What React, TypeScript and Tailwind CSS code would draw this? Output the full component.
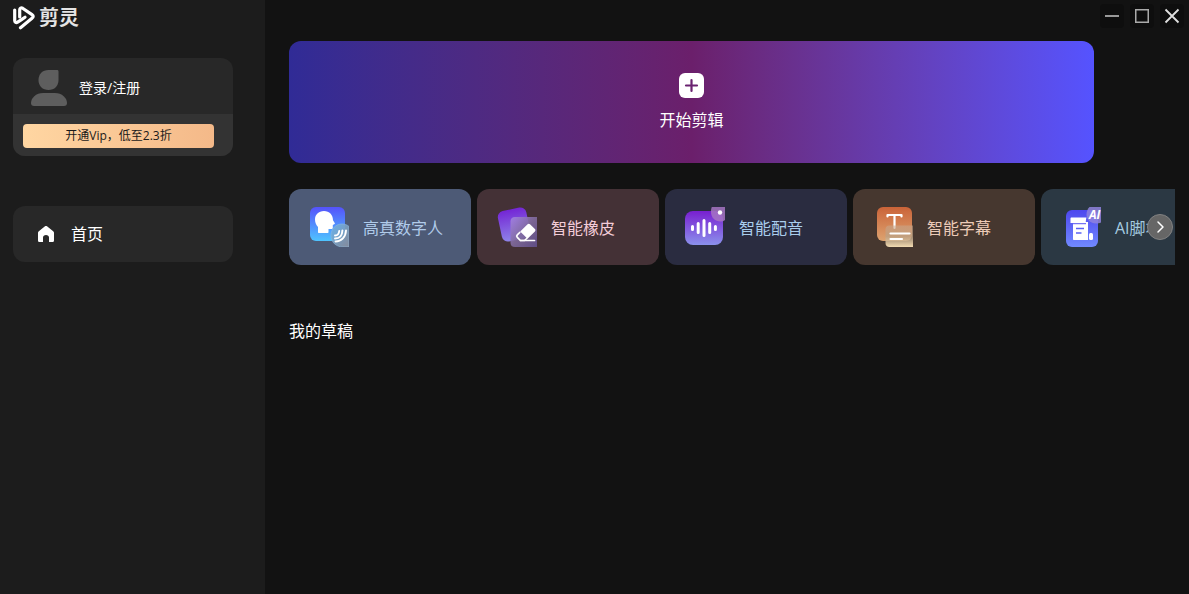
import type { ReactNode } from "react";

function Logo() {
  return (
    <svg width="22" height="24" viewBox="0 0 22 24" fill="none" stroke="#fff" strokeLinecap="round" strokeLinejoin="round" aria-hidden="true">
      <path d="M1.700 4V14.500C1.700 16.300 3.200 17 4.600 16.200L8.500 13.600L12 11.200" strokeWidth="3.200" />
      <path d="M6.700 11V4C6.700 2.200 8.200 1.400 9.600 2.200L19 8.600C20.600 9.700 20.600 11 19 12.200L7.500 21.800" strokeWidth="3.200" />
    </svg>
  );
}

function DigitalHumanIcon() {
  return (
    <svg width="40" height="40" viewBox="0 0 40 40" fill="none" aria-hidden="true">
      <defs>
        <linearGradient id="human-bg" x1="0" y1="0" x2="0" y2="1">
          <stop stopColor="#5552fb" />
          <stop offset="1" stopColor="#4fc4ff" />
        </linearGradient>
        <linearGradient id="human-glass" x1="0" y1="0" x2="1" y2="1">
          <stop stopColor="#6bb2e6" />
          <stop offset="1" stopColor="#8b90a0" />
        </linearGradient>
      </defs>
      <rect x="1" width="35" height="34" rx="6" fill="url(#human-bg)" />
      <path d="M15 4C9.600 4 6 7.600 6 12.500C6 15.800 7.300 18.200 9 20V25C9 25.700 9.300 26 10 26H18.500C19.200 26 19.500 25.700 19.500 25V22H22.500C23.300 22 23.800 21.500 23.800 20.700V18L25.600 17C26 16.700 26 16.300 25.700 15.900L24 13.300C24 7.800 20.300 4 15 4Z" fill="#fff" />
      <path d="M22 28.500C22 21.500 27 17 33 17C36 17 38.500 18 40 19.500V40H34C27 40 22 35 22 28.500Z" fill="url(#human-glass)" fillOpacity=".9" stroke="#8fb8dc" strokeWidth=".6" />
      <path d="M26 28.500C28.500 28.500 30 26.800 30.200 24M26 31.500C30.300 31.500 33.200 28.500 33.400 23.500M26.500 34.500C32.500 34.500 36.700 30 37 23.500" stroke="#fff" strokeWidth="1.900" strokeLinecap="round" />
    </svg>
  );
}

function EraserIcon() {
  return (
    <svg width="40" height="40" viewBox="0 0 40 40" fill="none" aria-hidden="true">
      <defs>
        <linearGradient id="eraser-bg" x1="0" y1="0" x2="0" y2="1">
          <stop stopColor="#7426d5" />
          <stop offset="1" stopColor="#8e83e8" />
        </linearGradient>
        <linearGradient id="eraser-glass" x1="0" y1="0" x2="1" y2="1">
          <stop stopColor="#a484e4" />
          <stop offset=".5" stopColor="#806a9c" />
          <stop offset="1" stopColor="#62508e" />
        </linearGradient>
      </defs>
      <rect x="2.500" y="2" width="29" height="31" rx="6" fill="url(#eraser-bg)" transform="rotate(-12 17 17)" />
      <path d="M18 10H40V40H18C15 40 13.500 38.500 13.500 35.500V14.500C13.500 11.500 15 10 18 10Z" fill="url(#eraser-glass)" fillOpacity=".9" />
      <path d="M30.600 17.300C31.300 16.600 32.300 16.600 33 17.300L37.900 22.100C38.600 22.800 38.600 23.700 37.900 24.400L30.500 31.800L23.200 24.500Z" fill="#fff" />
      <path d="M23.200 25L20.300 27.900C19.500 28.700 19.500 29.600 20.300 30.400L23.400 33.500H27.500L30.200 31" stroke="#fff" strokeWidth="1.700" strokeLinejoin="round" />
      <path d="M23.500 33.500H37.500" stroke="#fff" strokeWidth="1.700" strokeLinecap="round" />
    </svg>
  );
}

function DubbingIcon() {
  return (
    <svg width="40" height="40" viewBox="0 0 40 40" fill="none" aria-hidden="true">
      <defs>
        <linearGradient id="dub-bg" x1="0" y1="0" x2="0" y2="1">
          <stop stopColor="#781fd0" />
          <stop offset="1" stopColor="#8b91ec" />
        </linearGradient>
      </defs>
      <rect y="4" width="38" height="34" rx="8" fill="url(#dub-bg)" />
      <path d="M7.500 19.500V22.500M13.200 16.500V25.500M19 13.500V28.500M24.700 16.500V25.500M30.400 19.500V22.500" stroke="#fff" strokeWidth="3" strokeLinecap="round" />
      <path d="M26.800 0H40V13C38.700 14 37 14.500 35.500 14.500C30 14.500 26 10.500 26 5C26 3 26.200 1.300 26.800 0Z" fill="#a675c3" fillOpacity=".85" />
      <circle cx="35" cy="5.500" r="2.200" fill="#fff" />
    </svg>
  );
}

function SubtitleIcon() {
  return (
    <svg width="40" height="40" viewBox="0 0 40 40" fill="none" aria-hidden="true">
      <defs>
        <linearGradient id="sub-bg" x1="0" y1="0" x2="0" y2="1">
          <stop stopColor="#ca6338" />
          <stop offset="1" stopColor="#dda370" />
        </linearGradient>
        <linearGradient id="sub-glass" x1="0" y1="0" x2="0" y2="1">
          <stop stopColor="#c8a78c" stopOpacity=".55" />
          <stop offset=".5" stopColor="#b9a084" stopOpacity=".75" />
          <stop offset="1" stopColor="#f3dcb2" />
        </linearGradient>
      </defs>
      <rect x="4" width="35" height="34" rx="6" fill="url(#sub-bg)" />
      <path d="M14.500 9.500V8H28.500V9.500M21.500 8V21" stroke="#fff" strokeWidth="2.200" strokeLinecap="round" strokeLinejoin="round" />
      <path d="M16.500 18.500H40V40H16.500C14 40 12.500 38.500 12.500 36V22.500C12.500 20 14 18.500 16.500 18.500Z" fill="url(#sub-glass)" />
      <path d="M17.500 26.500H36.500M17.500 32H29" stroke="#fff" strokeWidth="2.200" strokeLinecap="round" />
    </svg>
  );
}

function ScriptIcon() {
  return (
    <svg width="40" height="40" viewBox="0 0 40 40" fill="none" aria-hidden="true">
      <defs>
        <linearGradient id="script-bg" x1="0" y1="0" x2="0" y2="1">
          <stop stopColor="#4d47ee" />
          <stop offset="1" stopColor="#7189ff" />
        </linearGradient>
      </defs>
      <rect x="5" y="3" width="32" height="37" rx="6" fill="url(#script-bg)" />
      <path d="M10.500 10.500H25.500C25 12 24.800 13.500 24.800 16H9.500V11.500C9.500 10.900 9.900 10.500 10.500 10.500Z" fill="#fff" />
      <path d="M12 15H27V33H13C12.400 33 12 32.600 12 32Z" fill="#fff" />
      <path d="M12 16.700H25" stroke="#5653f0" strokeWidth="1" />
      <rect x="28" y="26" width="4" height="7" rx="1.500" fill="#fff" />
      <path d="M15 21.500H23M15 26H20.500" stroke="#5a61f4" strokeWidth="1.500" />
      <path d="M28.500 0H40V15.500C38.500 16.200 36.500 16.500 35 16.500C29.500 16.500 25.500 12.500 25.500 7.500C25.500 4.500 26.500 2 28.500 0Z" fill="#8f83dd" fillOpacity=".85" />
      <text x="28" y="12" fill="#fff" fontSize="12" fontWeight="700" fontStyle="italic" fontFamily="Open Sans, sans-serif">AI</text>
    </svg>
  );
}

type Tool = { name: string; icon: ReactNode; className: string };

const tools: Tool[] = [
  { name: "高真数字人", icon: <DigitalHumanIcon />, className: "bg-[#4d5a76] text-[#b0cbea]" },
  { name: "智能橡皮", icon: <EraserIcon />, className: "bg-[#443136] text-[#f3ccd8]" },
  { name: "智能配音", icon: <DubbingIcon />, className: "bg-[#2a2c40] text-[#a9cdec]" },
  { name: "智能字幕", icon: <SubtitleIcon />, className: "bg-[#46372f] text-[#eccbb8]" },
  { name: "AI脚本", icon: <ScriptIcon />, className: "bg-[#2b3843] text-[#a5cbe0]" },
];

function Sidebar() {
  return (
    <aside className="w-[265px] shrink-0 bg-[#1c1c1c] pr-8 pl-[13px]">
      <div className="flex h-9 items-center gap-1">
        <Logo />
        <h1 className="text-xl font-bold text-[#e4e4e4]">剪灵</h1>
      </div>

      <div className="mt-[22px] overflow-hidden rounded-xl bg-[#282828]">
        <button type="button" className="flex h-14 w-full items-center gap-3 px-[18px] pt-1 text-sm text-white">
          <svg width="36" height="36" viewBox="0 0 36 36" fill="#5e5e5e" aria-hidden="true">
            <path d="M17.500 0H26C27 0 27.500 .5 27.500 1.500V10C27.500 16 23.500 20 17.500 20C11.500 20 7.500 16 7.500 10C7.500 4 11.500 0 17.500 0Z" />
            <path d="M12 23H24C31 23 36 28 36 33C36 35 35 36 33 36H3C1 36 0 35 0 33C0 28 5 23 12 23Z" />
          </svg>
          <span>登录/注册</span>
        </button>
        <div className="bg-[#333] pt-[10px] pr-[19px] pb-2 pl-[10px]">
          <button type="button" className="block h-6 w-full rounded bg-linear-to-r from-[#ffd6a2] to-[#f4b989] text-xs text-[#1a1a1a]">
            开通Vip，低至2.3折
          </button>
        </div>
      </div>

      <nav className="mt-[50px]">
        <a href="#home" className="flex h-14 items-center gap-4 rounded-xl bg-[#282828] px-6 text-base text-white">
          <svg width="18" height="18" viewBox="0 0 18 18" fill="#fff" aria-hidden="true">
            <path d="M8 1.300C8.600 .8 9.400 .8 10 1.300L16.200 6.200C16.700 6.600 17 7.100 17 7.800V15.500C17 16.300 16.500 17 15.700 17H12V12.500C12 11 10.800 10 9 10C7.200 10 6 11 6 12.500V17H2.300C1.500 17 1 16.300 1 15.500V7.800C1 7.100 1.300 6.600 1.800 6.200Z" />
          </svg>
          <span>首页</span>
        </a>
      </nav>
    </aside>
  );
}

function WindowControls() {
  return (
    <div className="-mr-[9px] flex justify-end gap-[6px] pt-1">
      <button type="button" aria-label="最小化" className="flex size-6 items-center justify-center rounded bg-[#0e0e0e]">
        <svg width="16" height="16" viewBox="0 0 16 16" stroke="#999" strokeWidth="2" aria-hidden="true">
          <path d="M1 8H15" />
        </svg>
      </button>
      <button type="button" aria-label="最大化" className="flex size-6 items-center justify-center rounded bg-[#0e0e0e]">
        <svg width="16" height="16" viewBox="0 0 16 16" fill="none" stroke="#aaa" strokeWidth="1.500" aria-hidden="true">
          <rect x="1.750" y="1.750" width="12.500" height="12.500" />
        </svg>
      </button>
      <button type="button" aria-label="关闭" className="flex size-6 items-center justify-center rounded bg-[#0e0e0e]">
        <svg width="16" height="16" viewBox="0 0 16 16" stroke="#e0e0e0" strokeWidth="1.800" aria-hidden="true">
          <path d="M1.500 1.500L14.500 14.500M14.500 1.500L1.500 14.500" />
        </svg>
      </button>
    </div>
  );
}

export default function App() {
  return (
    <div className="flex min-h-screen bg-[#121212] font-['Open_Sans','Noto_Sans_CJK_SC',sans-serif]">
      <Sidebar />

      <main className="min-w-0 flex-1 pr-[14px] pl-6">
        <WindowControls />

        <div className="mt-[13px] pr-[81px]">
          <button
            type="button"
            className="flex h-[122px] w-full flex-col items-center justify-center gap-[10px] rounded-xl bg-linear-to-r from-[#302b96] via-[#6b1f6b] to-[#5553ff] text-base text-white"
          >
            <svg width="25" height="25" viewBox="0 0 25 25" fill="none" aria-hidden="true">
              <rect width="25" height="25" rx="6" fill="#fff" />
              <path d="M12.500 7V18M7 12.500H18" stroke="#6a2270" strokeWidth="2.200" strokeLinecap="round" />
            </svg>
            <span>开始剪辑</span>
          </button>
        </div>

        <div className="relative mt-[26px]">
          <div className="flex gap-[6px] overflow-hidden">
            {tools.map((tool) => (
              <button
                key={tool.name}
                type="button"
                className={`flex h-[76px] w-[182px] shrink-0 items-center gap-[14px] rounded-xl pl-5 text-base ${tool.className}`}
              >
                {tool.icon}
                <span className="pt-[2px]">{tool.name}</span>
              </button>
            ))}
          </div>
          <button
            type="button"
            aria-label="下一页"
            className="absolute top-1/2 right-[2px] flex size-[26px] -translate-y-1/2 items-center justify-center rounded-full border border-[#828282] bg-[#666]"
          >
            <svg width="16" height="16" viewBox="0 0 16 16" fill="none" stroke="#fff" strokeWidth="1.500" strokeLinecap="round" strokeLinejoin="round" aria-hidden="true">
              <path d="M6 3L11 8L6 13" />
            </svg>
          </button>
        </div>

        <h2 className="mt-[54px] text-base text-white">我的草稿</h2>
      </main>
    </div>
  );
}
